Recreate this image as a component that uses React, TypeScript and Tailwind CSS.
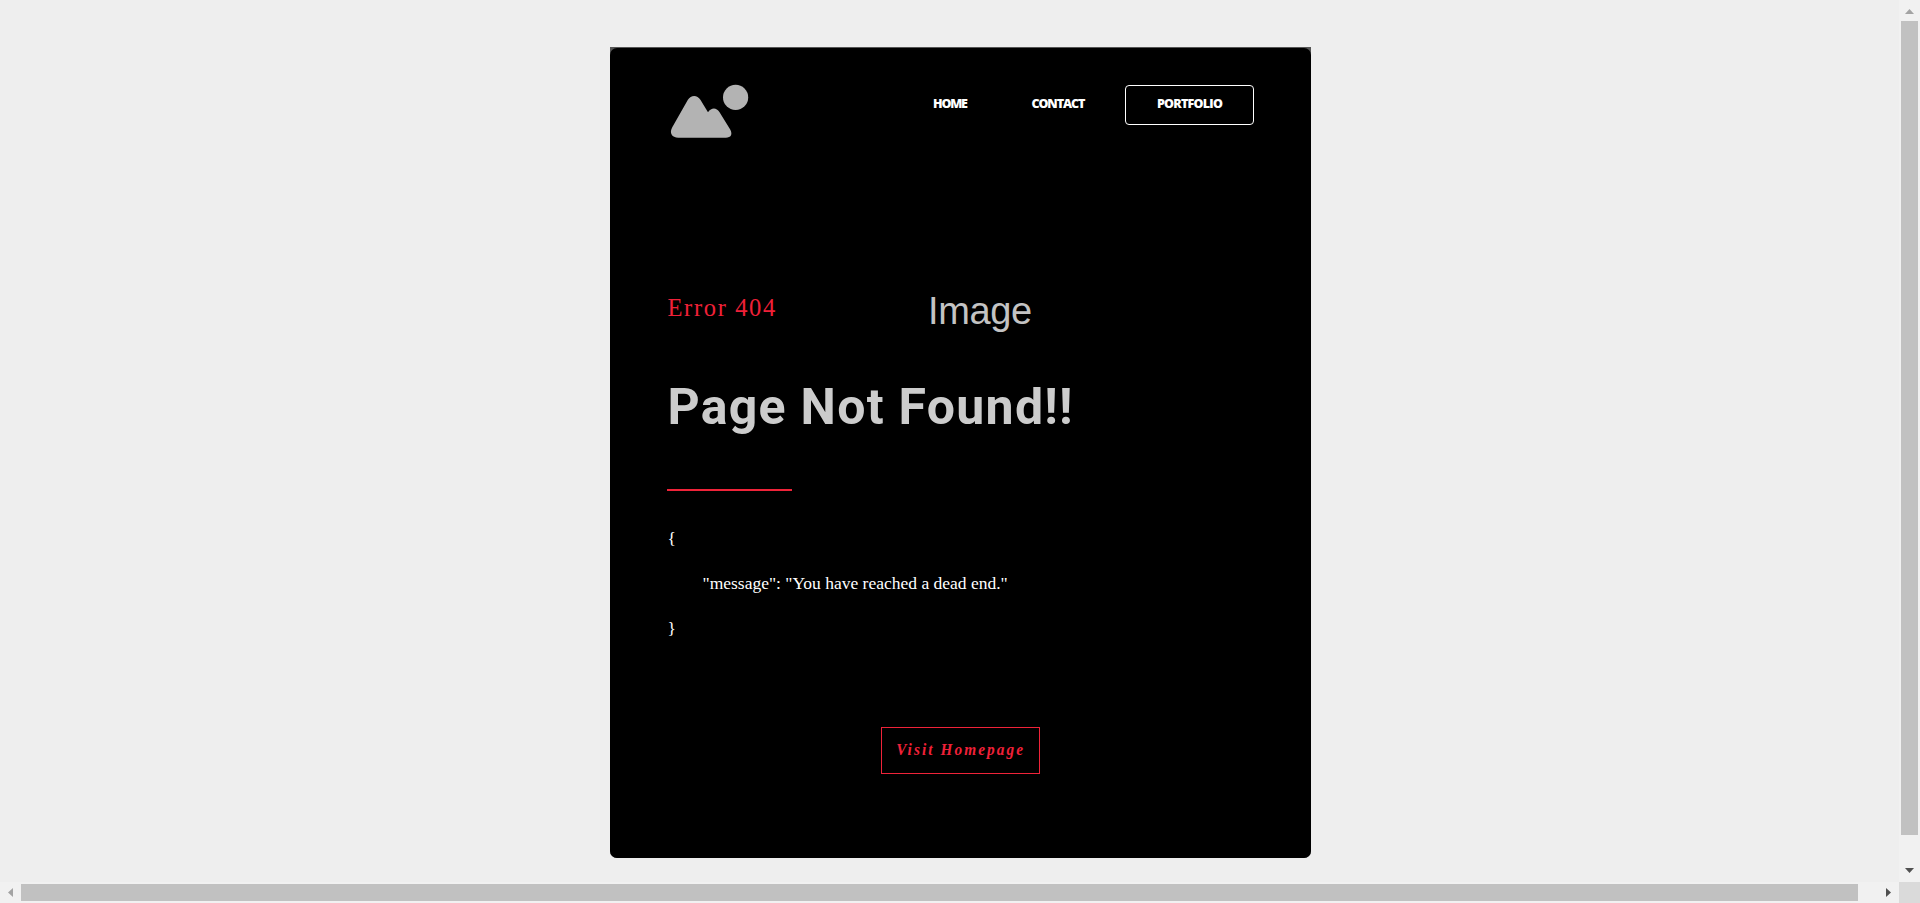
function Logo() {
  return (
    <svg className="h-[56px] w-[82px]" viewBox="0 0 82 56" fill="#b3b3b3" aria-label="Logo">
      <circle cx="68.6" cy="13.4" r="12.6" />
      <path d="M20.9 15.8 C23.9 10.7 30.4 10.7 33.4 15.8 L41 28.2 C44.4 23.2 49.4 23.2 52.4 28 L63.2 45.5 C65.9 50.5 63.9 53.700 58.9 53.700 H11.4 C4.900 53.700 1.900 49 5.400 43 Z" />
    </svg>
  );
}

function NavBar() {
  return (
    <header className="flex h-[56px] justify-between">
      <Logo />
      <nav className="mt-px flex h-[40px] font-['Open_Sans',sans-serif] text-[12.500px] leading-[37px] font-extrabold text-white">
        <a className="w-[98.500px] tracking-[-1.2px]">HOME</a>
        <a className="w-[93.500px] tracking-[-1.1px]">CONTACT</a>
        <a className="w-[129px] rounded border-[1.500px] border-white text-center leading-[36px] tracking-[-0.75px]">PORTFOLIO</a>
      </nav>
    </header>
  );
}

function Card() {
  return (
    <div className="w-[701px] rounded-b-[7px] bg-[#555555] pt-px">
      <main className="flex h-[810px] w-[701px] flex-col rounded-[7px] bg-black pt-[36px] pr-[57px] pl-[57px]">
        <NavBar />
        <section className="mt-[148px] flex h-[50px] items-start">
          <p className="mt-[5px] w-[261px] pl-[0.500px] font-['Liberation_Serif',serif] text-[24.500px] leading-[30px] tracking-[1.65px] text-[#f02038]">Error 404</p>
          <p className="-mt-px font-['Liberation_Sans',sans-serif] text-[38px] leading-[48px] tracking-[-0.4px] text-[#c3c3c3]">Image</p>
        </section>
        <h1 className="mt-[39px] h-[60px] pl-[0.500px] font-[Roboto,sans-serif] text-[50px] leading-[60px] font-bold tracking-[1.28px] whitespace-nowrap text-[#cccccc]">Page Not Found!!</h1>
        <div className="mt-[52px] h-[2px] w-[125px] bg-[#ef2339]" />
        <div className="mt-[25px] pl-[0.500px] font-['Liberation_Serif',serif] text-[17.500px] leading-[45px] text-white">
          <p>{"{"}</p>
          <p className="pl-[35px]">"message": "You have reached a dead end."</p>
          <p>{"}"}</p>
        </div>
        <a className="mt-[76px] ml-[214px] flex h-[47px] w-[159px] items-center justify-center border border-[#ef2339] pb-[2px] font-['Liberation_Serif',serif] text-[17px] font-bold tracking-[2.3px] whitespace-nowrap text-[#f02038] italic">
          <span className="scale-x-90">Visit Homepage</span>
        </a>
      </main>
    </div>
  );
}

export default function App() {
  return (
    <div className="grid h-[903px] w-[1920px] grid-cols-[1899px_21px] grid-rows-[882px_21px] overflow-hidden bg-[#eeeeee]">
      <div className="pt-[47px] pl-[610px]">
        <Card />
      </div>
      <div className="flex flex-col items-center bg-[#f1f1f1]">
        <svg className="h-[21px] w-[17px]" viewBox="0 0 17 21" fill="#a3a3a3"><path d="M4 14 L8.500 9 L13 14 Z" /></svg>
        <div className="h-[814px] w-[17px] bg-[#c1c1c1]" />
        <svg className="mt-[26px] h-[21px] w-[17px]" viewBox="0 0 17 21" fill="#505050"><path d="M4 7 H13 L8.500 12 Z" /></svg>
      </div>
      <div className="flex items-center bg-[#f1f1f1]">
        <svg className="h-[17px] w-[21px]" viewBox="0 0 21 17" fill="#a3a3a3"><path d="M13 4 V13 L8 8.500 Z" /></svg>
        <div className="h-[17px] w-[1837px] bg-[#c1c1c1]" />
        <svg className="ml-[20px] h-[17px] w-[21px]" viewBox="0 0 21 17" fill="#505050"><path d="M8 4 V13 L13 8.500 Z" /></svg>
      </div>
      <div className="bg-[#dadada]" />
    </div>
  );
}
